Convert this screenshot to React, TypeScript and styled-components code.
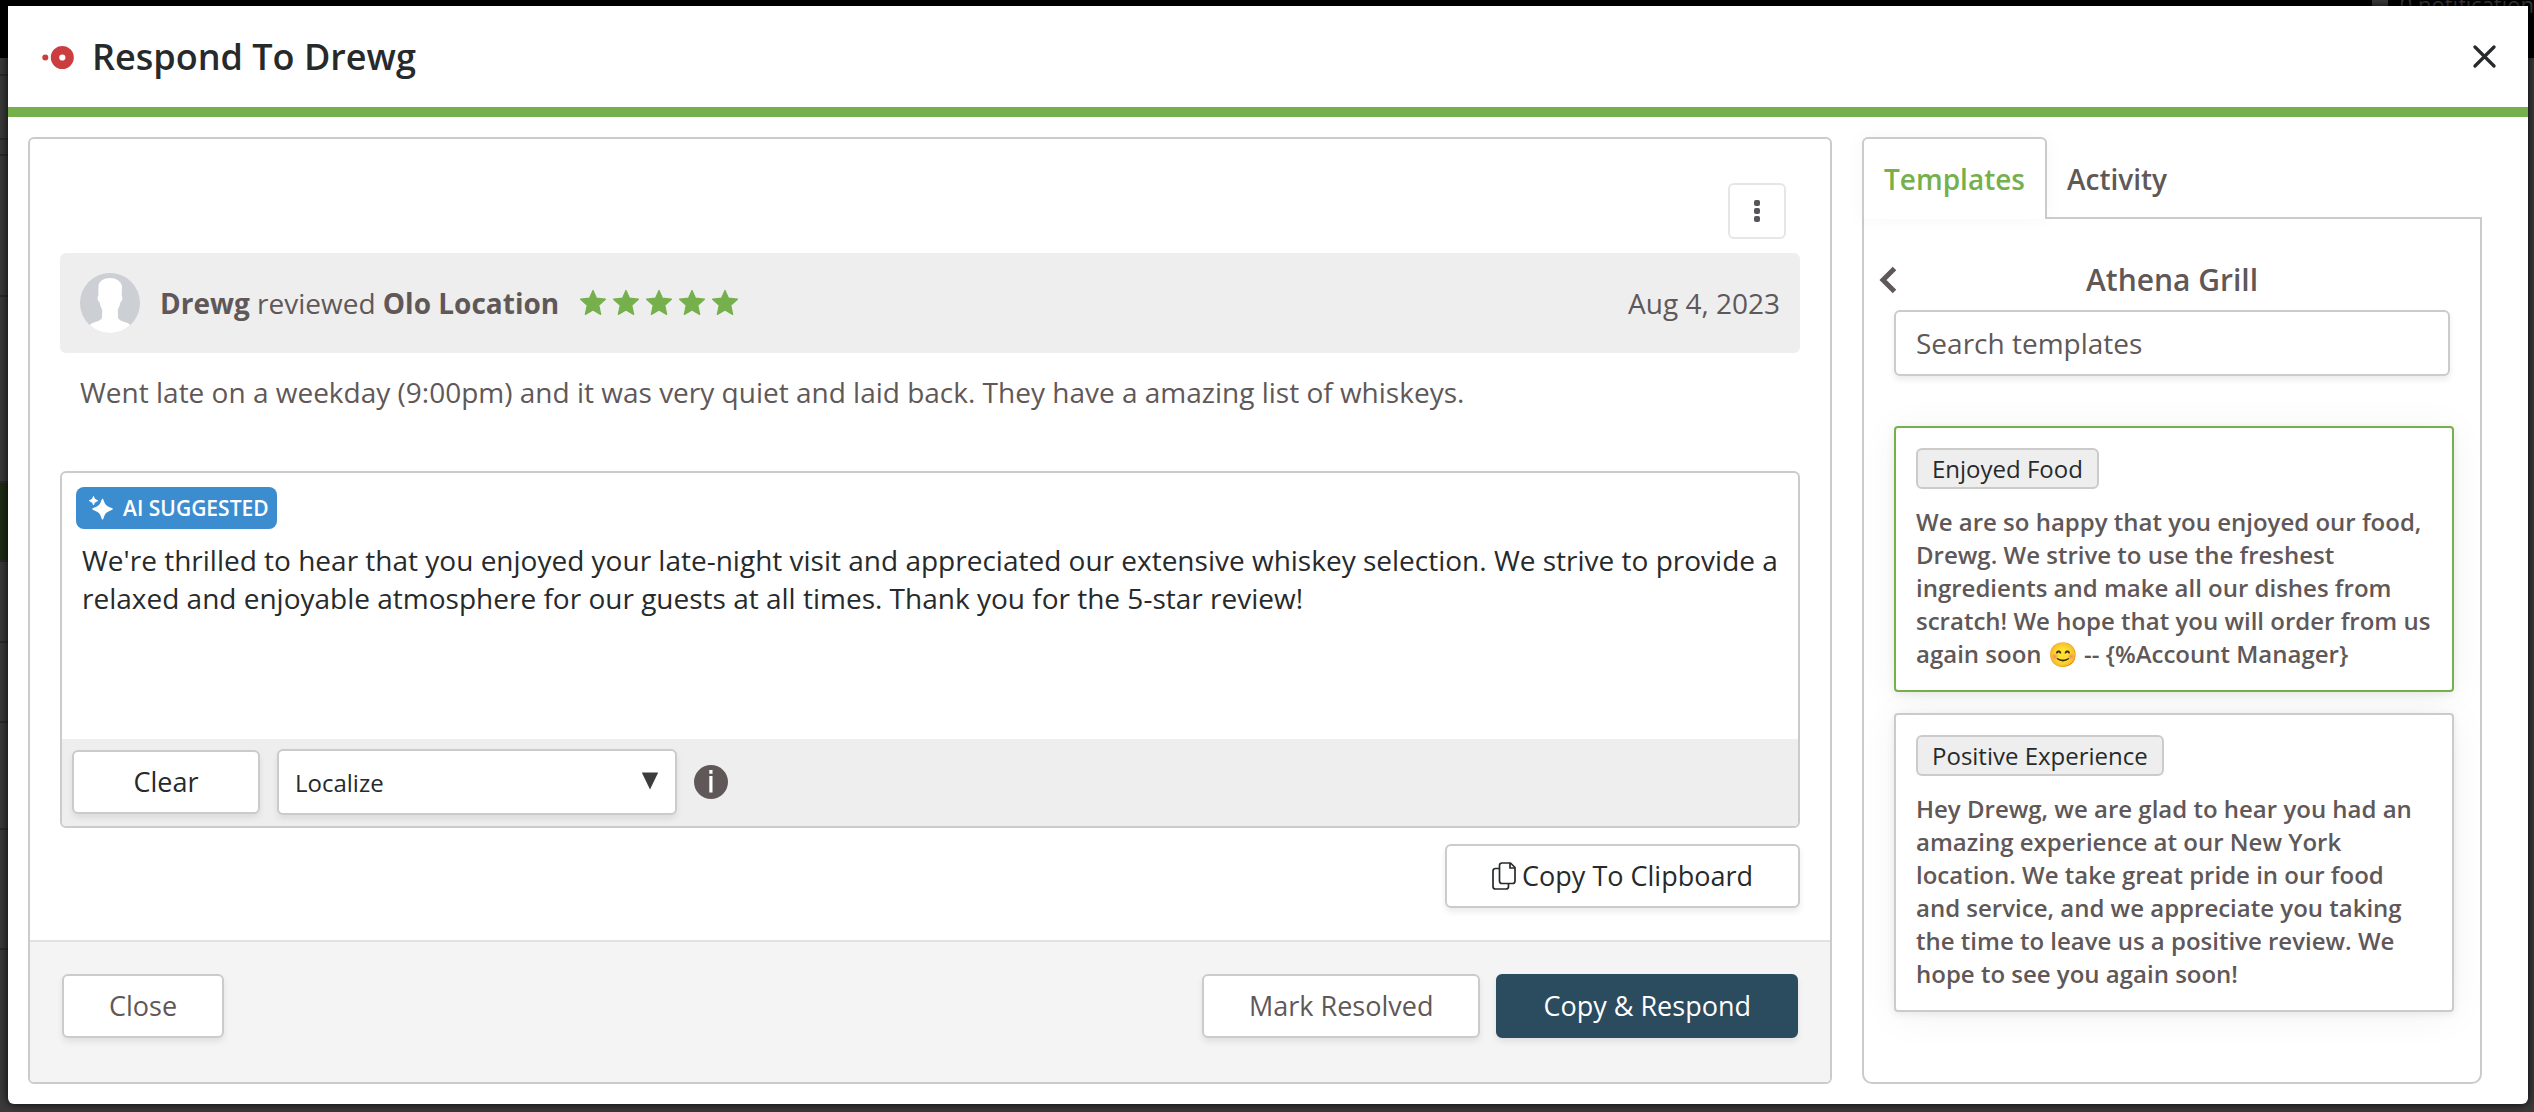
import React, { useState } from "react";
import styled, { createGlobalStyle, css } from "styled-components";

const color = {
  green: "#76b04d",
  navy: "#2b4b5e",
  blue: "#3c8dd0",
  line: "#cbcbcb",
  softLine: "#e1e1e1",
  fill: "#eeeeee",
  text: "#605858",
  ink: "#272a2b",
};

const GlobalStyle = createGlobalStyle`
  *, *::before, *::after { box-sizing: border-box; }
  body {
    margin: 0;
    background: #3a3a3a;
    color: ${color.text};
    font-family: "Open Sans", "Noto Sans", sans-serif;
    font-size: 28px;
    line-height: 38px;
  }
  button, input, select, textarea { font-family: inherit; color: inherit; margin: 0; }
  h1, h2, p { margin: 0; }
`;

/* Dimmed page behind the dialog */

const Page = styled.div`
  position: relative;
  display: flex;
  min-height: 100vh;
  padding: 6px 6px 8px 8px;
`;

const Backdrop = styled.div`
  position: absolute;
  inset: 0;
  overflow: hidden;
`;

const BackdropBar = styled.div`
  display: flex;
  justify-content: flex-end;
  align-items: flex-start;
  gap: 12px;
  height: 58px;
  background: #000;
  color: #3c3c3c;
  font-size: 22px;
  line-height: 8px;
  white-space: nowrap;
`;

const BackdropBell = styled.span`
  width: 16px;
  height: 20px;
  background: #3c3c3c;
`;

const BackdropNav = styled.div`
  width: 16px;
`;

const BackdropItem = styled.div<{ $h: number; $active?: boolean }>`
  height: ${(p) => p.$h}px;
  background: ${(p) => (p.$active ? "#1d2c13" : "#3a3a3a")};
  border-bottom: 2px solid #2b2b2b;
`;

/* Dialog */

const Dialog = styled.section`
  position: relative;
  flex: 1;
  min-width: 0;
  display: flex;
  flex-direction: column;
  background: #fff;
  border-radius: 0 0 6px 6px;
  box-shadow: 0 0 10px rgba(0, 0, 0, 0.9);
`;

const Header = styled.header`
  display: flex;
  align-items: center;
  gap: 16px;
  height: 111px;
  padding: 0 32px 0 34px;
  border-bottom: 10px solid ${color.green};
`;

const Title = styled.h1`
  flex: 1;
  color: ${color.ink};
  font-size: 36px;
  line-height: 48px;
  font-weight: 600;
`;

const IconButton = styled.button`
  display: flex;
  align-items: center;
  justify-content: center;
  padding: 0;
  border: 0;
  background: none;
  cursor: pointer;
`;

const Body = styled.div`
  flex: 1;
  display: grid;
  grid-template-columns: minmax(0, 1fr) 620px;
  gap: 30px;
  padding: 20px 46px 20px 20px;
`;

const MainPanel = styled.main`
  display: flex;
  flex-direction: column;
  border: 2px solid ${color.line};
  border-radius: 6px;
  overflow: hidden;
`;

const Content = styled.div`
  flex: 1;
  display: flex;
  flex-direction: column;
  padding: 44px 30px 32px;
`;

const MenuButton = styled(IconButton)`
  align-self: flex-end;
  width: 58px;
  height: 56px;
  margin-right: 14px;
  border: 2px solid #e6e6e6;
  border-radius: 6px;
  background: #fff;
`;

const ReviewBar = styled.div`
  display: flex;
  align-items: center;
  height: 100px;
  margin-top: 14px;
  padding: 0 20px;
  border-radius: 6px;
  background: ${color.fill};
`;

const Reviewer = styled.p`
  margin-left: 20px;
`;

const Stars = styled.div`
  display: flex;
  gap: 5px;
  margin-left: 20px;
`;

const ReviewDate = styled.time`
  margin-left: auto;
`;

const ReviewText = styled.p`
  padding: 20px 20px 60px;
`;

const Composer = styled.div`
  display: flex;
  flex-direction: column;
  border: 2px solid ${color.line};
  border-radius: 6px;
  overflow: hidden;
`;

const AiBadge = styled.div`
  align-self: flex-start;
  display: flex;
  align-items: center;
  gap: 10px;
  height: 42px;
  margin: 14px 14px 0;
  padding: 0 8px 0 13px;
  border-radius: 8px;
  background: ${color.blue};
  color: #fff;
  font-size: 21px;
  line-height: 28px;
  font-weight: 600;
`;

const ReplyBox = styled.textarea`
  display: block;
  width: 100%;
  height: 210px;
  padding: 12px 20px;
  border: 0;
  outline: 0;
  resize: none;
  background: transparent;
  color: ${color.ink};
  font-size: 28px;
  line-height: 38px;
`;

const Toolbar = styled.div`
  display: flex;
  align-items: center;
  gap: 17px;
  padding: 10px 10px 11px;
  background: ${color.fill};
`;

const raised = css`
  border: 2px solid ${color.line};
  border-radius: 6px;
  background: #fff;
  box-shadow: 0 4px 6px rgba(0, 0, 0, 0.08);
`;

const Button = styled.button<{ $tone?: "plain" | "dark" | "primary"; $width?: number }>`
  ${raised}
  display: flex;
  align-items: center;
  justify-content: center;
  gap: 6px;
  height: 64px;
  padding: 0 ${(p) => (p.$width ? 0 : 45)}px;
  ${(p) => p.$width && `width: ${p.$width}px;`}
  color: ${(p) => (p.$tone === "dark" ? color.ink : color.text)};
  font-size: 27px;
  line-height: 36px;
  white-space: nowrap;
  cursor: pointer;
  ${(p) =>
    p.$tone === "primary" &&
    css`
      border-color: ${color.navy};
      background: ${color.navy};
      color: #fff;
    `}
`;

const SelectWrap = styled.label`
  position: relative;
  display: block;
  width: 400px;
`;

const Select = styled.select`
  ${raised}
  display: block;
  appearance: none;
  width: 100%;
  height: 66px;
  padding: 0 48px 0 16px;
  color: ${color.ink};
  font-size: 24px;
  line-height: 33px;
`;

const SelectArrow = styled.svg`
  position: absolute;
  right: 18px;
  top: 23px;
  pointer-events: none;
`;

const CopyRow = styled.div`
  display: flex;
  justify-content: flex-end;
  margin-top: 16px;
`;

const Footer = styled.footer`
  display: flex;
  gap: 16px;
  padding: 32px 32px 44px;
  border-top: 2px solid ${color.softLine};
  background: #f4f4f4;
`;

const Spacer = styled.span`
  flex: 1;
`;

/* Side panel */

const Side = styled.aside`
  display: flex;
  flex-direction: column;
`;

const Tabs = styled.div`
  display: flex;
  margin-bottom: -2px;
`;

const Tab = styled.button<{ $active?: boolean }>`
  position: relative;
  height: 82px;
  padding: 0 20px;
  border: 0;
  border-top: 2px solid transparent;
  background: none;
  font-size: 28px;
  line-height: 38px;
  font-weight: 600;
  cursor: pointer;
  ${(p) =>
    p.$active &&
    css`
      z-index: 1;
      border: 2px solid ${color.line};
      border-bottom: 0;
      border-radius: 6px 6px 0 0;
      background: #fff;
      color: ${color.green};
      box-shadow: 0 0 20px rgba(0, 0, 0, 0.04);
    `}
`;

const SidePanel = styled.div`
  flex: 1;
  padding: 41px 26px 40px 30px;
  border: 2px solid ${color.line};
  border-radius: 0 0 10px 10px;
`;

const GroupRow = styled.div`
  display: grid;
  grid-template-columns: 32px 1fr 32px;
  align-items: center;
  justify-items: start;
  margin: 0 -12px 10px -16px;
`;

const GroupName = styled.h2`
  justify-self: center;
  font-size: 30px;
  line-height: 40px;
  font-weight: 600;
`;

const SearchInput = styled.input`
  ${raised}
  display: block;
  width: calc(100% - 4px);
  height: 66px;
  padding: 0 20px;
  font-size: 28px;
  line-height: 38px;
  &::placeholder { color: ${color.text}; opacity: 1; }
`;

const CardList = styled.div`
  display: flex;
  flex-direction: column;
  gap: 21px;
  margin-top: 50px;
`;

const Card = styled.article<{ $selected?: boolean }>`
  padding: 20px;
  border: 2px solid ${(p) => (p.$selected ? color.green : color.line)};
  border-radius: 4px;
  background: #fff;
  box-shadow: 0 2px 8px rgba(0, 0, 0, 0.08), 0 4px 40px rgba(0, 0, 0, 0.05);
`;

const Tag = styled.span`
  display: inline-flex;
  align-items: center;
  height: 41px;
  padding: 0 14px;
  border: 2px solid ${color.line};
  border-radius: 6px;
  background: ${color.fill};
  color: ${color.ink};
  font-size: 24px;
  line-height: 33px;
  vertical-align: top;
`;

const CardText = styled.p`
  margin-top: 16px;
  font-size: 24px;
  line-height: 33px;
  font-weight: 600;
`;

const Star = () => (
  <svg width="28" height="28" viewBox="0 0 26 26" aria-hidden="true">
    <path
      d="M13 1.4l3.2 7.2 8.3.9-6.2 5.5 1.8 8.6L13 19.4l-7.1 4.2 1.8-8.6L1.5 9.5l8.3-.9z"
      fill={color.green}
      stroke={color.green}
      strokeWidth="1.2"
      strokeLinejoin="round"
    />
  </svg>
);

const templates = [
  {
    name: "Enjoyed Food",
    selected: true,
    text: "We are so happy that you enjoyed our food, Drewg. We strive to use the freshest ingredients and make all our dishes from scratch! We hope that you will order from us again soon 😊 -- {%Account Manager}",
  },
  {
    name: "Positive Experience",
    selected: false,
    text: "Hey Drewg, we are glad to hear you had an amazing experience at our New York location. We take great pride in our food and service, and we appreciate you taking the time to leave us a positive review. We hope to see you again soon!",
  },
];

const navRows = [18, 64, 16, 141, 186, 79, 81, 80, 107, 120];

export default function App() {
  const [reply, setReply] = useState(
    "We're thrilled to hear that you enjoyed your late-night visit and appreciated our extensive whiskey selection. We strive to provide a relaxed and enjoyable atmosphere for our guests at all times. Thank you for the 5-star review!"
  );

  return (
    <Page>
      <GlobalStyle />
      <Backdrop aria-hidden="true">
        <BackdropBar>
          <BackdropBell />
          0 notification
        </BackdropBar>
        <BackdropNav>
          {navRows.map((h, i) => (
            <BackdropItem key={i} $h={h} $active={i === 5} />
          ))}
        </BackdropNav>
      </Backdrop>

      <Dialog role="dialog" aria-labelledby="dialog-title">
        <Header>
          <svg width="34" height="26" viewBox="0 0 34 26" aria-hidden="true">
            <circle cx="3.3" cy="13.5" r="3" fill="#cb3e3f" />
            <circle cx="20.3" cy="13.5" r="7.3" fill="none" stroke="#cb3e3f" strokeWidth="8.4" />
          </svg>
          <Title id="dialog-title">Respond To Drewg</Title>
          <IconButton aria-label="Close dialog">
            <svg width="23" height="23" viewBox="0 0 23 23" stroke={color.ink} strokeWidth="3.2" strokeLinecap="round">
              <path d="M2 2l19 19M21 2L2 21" />
            </svg>
          </IconButton>
        </Header>

        <Body>
          <MainPanel>
            <Content>
              <MenuButton aria-label="More options">
                <svg width="6" height="24" viewBox="0 0 6 24" fill="#55565a">
                  <rect width="6" height="6" y="1" rx="2" />
                  <rect width="6" height="6" y="9" rx="2" />
                  <rect width="6" height="6" y="17" rx="2" />
                </svg>
              </MenuButton>

              <ReviewBar>
                <svg width="60" height="60" viewBox="0 0 60 60" aria-hidden="true">
                  <clipPath id="avatar-clip">
                    <circle cx="30" cy="30" r="30" />
                  </clipPath>
                  <g clipPath="url(#avatar-clip)">
                    <rect width="60" height="60" fill="#cccfd4" />
                    <path
                      fill="#fff"
                      d="M30 5c6 0 11 3 12 8.500l-.3 9.500c1.200.3.9 5-1.200 6-.6 3.500-1.800 6-2.700 7.500l.2 8.500c1 2.500 5 3.500 8 4.500 3 1.200 4.500 2 6 4V60H8v-6.500c1.500-2 3-2.800 6-4 3-1 7-2 8-4.500l.2-8.500c-.9-1.500-2.100-4-2.700-7.500-2.100-1-2.400-5.700-1.200-6L18.500 12C20 8 23.500 5 30 5z"
                    />
                  </g>
                </svg>
                <Reviewer>
                  <b>Drewg</b> reviewed <b>Olo Location</b>
                </Reviewer>
                <Stars role="img" aria-label="5 out of 5 stars">
                  <Star />
                  <Star />
                  <Star />
                  <Star />
                  <Star />
                </Stars>
                <ReviewDate dateTime="2023-08-04">Aug 4, 2023</ReviewDate>
              </ReviewBar>

              <ReviewText>
                Went late on a weekday (9:00pm) and it was very quiet and laid back. They have a amazing list of whiskeys.
              </ReviewText>

              <Composer>
                <AiBadge>
                  <svg width="24" height="24" viewBox="0 0 24 24" fill="#fff" aria-hidden="true">
                    <path d="M13.500 3.500c1.600 5.500 3.200 7.300 9.500 9.500-6.300 2.200-7.900 4-9.500 9.800-1.600-5.800-3.200-7.600-9.500-9.800 6.300-2.200 7.900-4 9.500-9.500z" stroke="#fff" strokeWidth="1.5" strokeLinejoin="round" />
                    <path d="M4.500 0.500c.9 2.600 1.600 3.300 4.200 4.200-2.600.9-3.300 1.600-4.200 4.200C3.600 6.300 2.900 5.600.3 4.700 2.900 3.800 3.600 3.100 4.500.5z" stroke="#fff" strokeLinejoin="round" />
                  </svg>
                  AI SUGGESTED
                </AiBadge>
                <ReplyBox aria-label="Response" value={reply} spellCheck={false} onChange={(e) => setReply(e.target.value)} />
                <Toolbar>
                  <Button $tone="dark" $width={188} onClick={() => setReply("")}>
                    Clear
                  </Button>
                  <SelectWrap>
                    <Select aria-label="Localize" defaultValue="localize">
                      <option value="localize">Localize</option>
                    </Select>
                    <SelectArrow width="18" height="18" viewBox="0 0 18 18" aria-hidden="true">
                      <path d="M.8.5h16.400L9 17.500z" fill="#3c3c3c" />
                    </SelectArrow>
                  </SelectWrap>
                  <svg width="34" height="34" viewBox="0 0 34 34" role="img" aria-label="Information">
                    <circle cx="17" cy="17" r="17" fill={color.text} />
                    <path d="M15.300 5h3.200v3.800h-3.200zM15.300 11h3.200v16.500h-3.200z" fill="#fff" />
                  </svg>
                </Toolbar>
              </Composer>

              <CopyRow>
                <Button $tone="dark">
                  <svg width="24" height="28" viewBox="0 0 24 28" fill="none" stroke={color.ink} strokeWidth="1.700" strokeLinejoin="round" aria-hidden="true">
                    <path d="M10 1h8.500L23 5.500V19q0 2.500-2.500 2.500H10Q7.500 21.500 7.500 19V3.500Q7.500 1 10 1z" />
                    <path d="M18 1v5h5" />
                    <path d="M7.500 6.500H3.500Q1 6.500 1 9v15.500Q1 27 3.500 27H14q2.500 0 2.500-2.500v-3" />
                  </svg>
                  Copy To Clipboard
                </Button>
              </CopyRow>
            </Content>

            <Footer>
              <Button>Close</Button>
              <Spacer />
              <Button>Mark Resolved</Button>
              <Button $tone="primary">Copy &amp; Respond</Button>
            </Footer>
          </MainPanel>

          <Side>
            <Tabs role="tablist">
              <Tab role="tab" aria-selected="true" $active>
                Templates
              </Tab>
              <Tab role="tab" aria-selected="false">
                Activity
              </Tab>
            </Tabs>
            <SidePanel role="tabpanel">
              <GroupRow>
                <IconButton aria-label="Back">
                  <svg width="20" height="28" viewBox="0 0 20 28" fill="none" stroke={color.text} strokeWidth="5">
                    <path d="M16.500 2.500L5 14l11.500 11.500" />
                  </svg>
                </IconButton>
                <GroupName>Athena Grill</GroupName>
              </GroupRow>
              <SearchInput type="search" aria-label="Search templates" placeholder="Search templates" />
              <CardList>
                {templates.map((t) => (
                  <Card key={t.name} $selected={t.selected}>
                    <Tag>{t.name}</Tag>
                    <CardText>{t.text}</CardText>
                  </Card>
                ))}
              </CardList>
            </SidePanel>
          </Side>
        </Body>
      </Dialog>
    </Page>
  );
}
